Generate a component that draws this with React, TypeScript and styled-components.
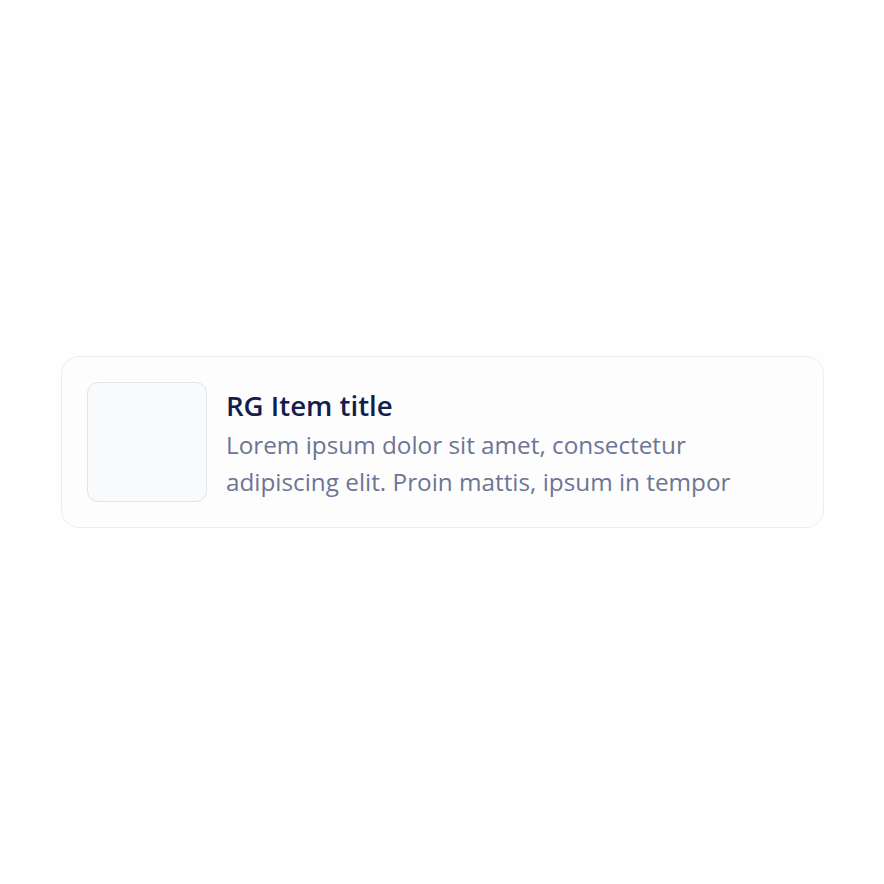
import styled, { createGlobalStyle } from "styled-components";

const GlobalStyle = createGlobalStyle`
  html, body {
    margin: 0;
    padding: 0;
    background: #fefefe;
    font-family: "Open Sans", "Noto Sans", sans-serif;
  }
  #root {
    min-height: 884px;
  }
`;

export default function App() {
  return (
    <>
      <GlobalStyle />
      <SPage>
        <SCard>
          <SThumb />
          <STextContent>
            <STitle>RG Item title</STitle>
            <SDescription>
              Lorem ipsum dolor sit amet, consectetur
              <br />
              adipiscing elit. Proin mattis, ipsum in tempor
            </SDescription>
          </STextContent>
        </SCard>
      </SPage>
    </>
  );
}

const SPage = styled.main`
  min-height: 884px;
  display: flex;
  align-items: center;
  justify-content: center;
  padding: 0 60px 0 61px;
  box-sizing: border-box;
`;

const SCard = styled.div`
  width: 100%;
  box-sizing: border-box;
  display: flex;
  align-items: center;
  gap: 19px;
  padding: 25px;
  background: #fdfdfd;
  border: 1px solid #ededf0;
  border-radius: 18px;
`;

const SThumb = styled.div`
  flex: 0 0 auto;
  width: 120px;
  height: 120px;
  box-sizing: border-box;
  background: #f9fafb;
  border: 1.5px solid #e2e4e9;
  border-radius: 11px;
`;

const STextContent = styled.div`
  display: flex;
  flex-direction: column;
`;

const STitle = styled.h3`
  margin: 0;
  font-size: 27.6px;
  font-weight: 600;
  line-height: 41px;
  color: #141d4f;
`;

const SDescription = styled.p`
  margin: 0;
  font-size: 24.3px;
  line-height: 37px;
  color: #6d7595;
`;
